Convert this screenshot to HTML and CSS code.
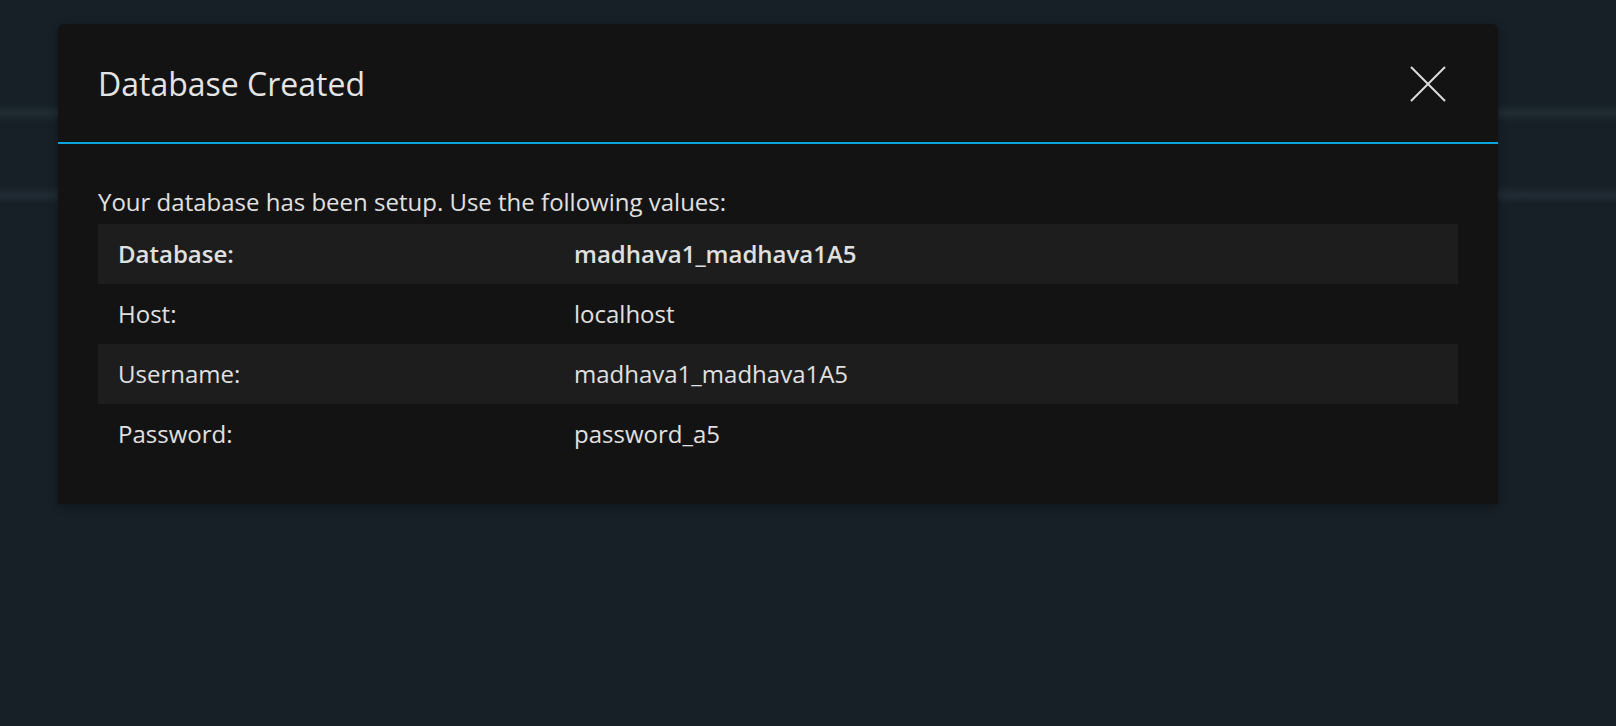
FILE: index.html
```html
<!DOCTYPE html>
<html lang="en">
<head>
<meta charset="utf-8">
<title>Database Created</title>
<link rel="stylesheet" href="styles.css">
</head>
<body>
<div class="page">
  <div class="bg-band band-1"></div>
  <div class="bg-band band-2"></div>
</div>
<div class="modal">
  <div class="modal-header">
    <h2 class="modal-title">Database Created</h2>
    <button class="close-btn" aria-label="Close">
      <svg width="36" height="36" viewBox="0 0 36 36"><path d="M1 1 L35 35 M35 1 L1 35" stroke="#dcdcdc" stroke-width="2" fill="none"/></svg>
    </button>
  </div>
  <div class="modal-body">
    <p class="intro">Your database has been setup. Use the following values:</p>
    <table class="values">
      <tr class="row-strong"><td class="label">Database:</td><td>madhava1_madhava1A5</td></tr>
      <tr><td class="label">Host:</td><td>localhost</td></tr>
      <tr><td class="label">Username:</td><td>madhava1_madhava1A5</td></tr>
      <tr><td class="label">Password:</td><td>password_a5</td></tr>
    </table>
  </div>
</div>
</body>
</html>
```

FILE: styles.css
```css
html, body {
  margin: 0;
  padding: 0;
  height: 100%;
}
body {
  background: #172027;
  font-family: "Open Sans", "Noto Sans", sans-serif;
  color: #e2e2e2;
  overflow: hidden;
}
.page {
  padding-top: 104px;
}
.bg-band {
  height: 18px;
  background: linear-gradient(to bottom, rgba(40,52,60,0) 0%, rgba(36,48,56,0.7) 50%, rgba(40,52,60,0) 100%);
}
.band-2 {
  margin-top: 64px;
}
.modal {
  position: absolute;
  top: 24px;
  left: 58px;
  width: 1440px;
  background: #131313;
  border-radius: 6px 6px 0 0;
  box-shadow: 0 2px 8px rgba(0, 0, 0, 0.35);
}
.modal-header {
  display: flex;
  align-items: center;
  justify-content: space-between;
  padding: 40px 40px 38px 40px;
  border-bottom: 2px solid #0aa6da;
}
.modal-title {
  margin: 0;
  font-size: 32px;
  font-weight: 400;
  line-height: 40px;
  color: #e4e4e4;
}
.close-btn {
  width: 36px;
  height: 36px;
  padding: 0;
  margin-right: 12px;
  border: 0;
  background: none;
  display: flex;
}
.modal-body {
  padding: 40px 40px 40px 40px;
}
.intro {
  margin: 0 0 4px 0;
  font-size: 24px;
  line-height: 36px;
  color: #e0e0e0;
}
.values {
  width: 100%;
  border-collapse: collapse;
  font-size: 24px;
}
.values td {
  height: 60px;
  padding: 0 20px;
  line-height: 32px;
  vertical-align: middle;
  color: #e0e0e0;
}
.values td.label {
  width: 416px;
}
.values tr:nth-child(odd) {
  background: #1d1d1d;
}
.row-strong td {
  font-weight: 600;
}
```
